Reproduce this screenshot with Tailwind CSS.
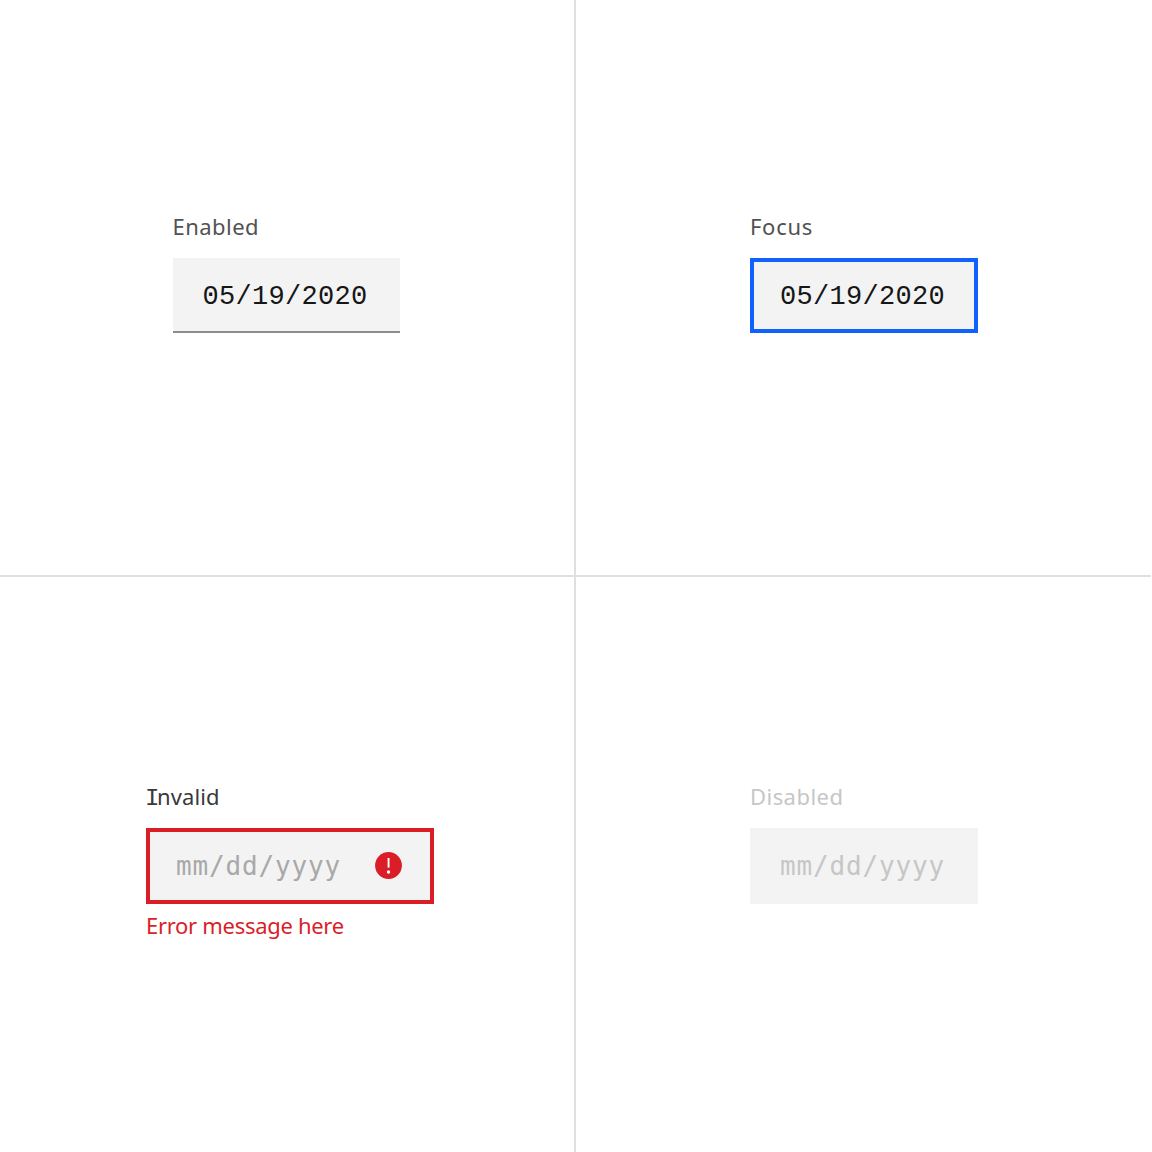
<!DOCTYPE html>
<html lang="en"><head><meta charset="utf-8"><title>Date input states</title>
<script src="https://cdn.jsdelivr.net/npm/@tailwindcss/browser@4"></script></head>
<body class="bg-white font-['Noto_Sans',sans-serif] text-[22px] leading-8 text-[#525252]">
<main class="grid h-[1152px] w-[1151px] grid-cols-[576px_575px] grid-rows-[577px_575px] overflow-hidden">
  <section class="border-r-2 border-b-2 border-[#e0e0e0] pt-[210px] pl-[172.5px]">
    <div class="h-8 tracking-[0.45px]">Enabled</div>
    <div class="mt-4 flex h-[75px] w-[227px] items-center border-b-2 border-[#8d8d8d] bg-[#f3f3f3] pl-[30px] font-['Liberation_Mono',monospace] text-[27px] tracking-[0.3px] text-[#161616]"><span class="pt-1">05/19/2020</span></div>
  </section>
  <section class="border-b-2 border-[#e0e0e0] pt-[210px] pl-[174px]">
    <div class="h-8 tracking-[0.7px]">Focus</div>
    <div class="mt-4 flex h-[75px] w-[228px] items-center border-4 border-[#0f62fe] bg-[#f3f3f3] pl-[26px] font-['Liberation_Mono',monospace] text-[27px] tracking-[0.3px] text-[#161616]"><span class="pt-0.5">05/19/2020</span></div>
  </section>
  <section class="border-r-2 border-[#e0e0e0] pt-[203px] pl-[146px]">
    <div class="-ml-px h-8 tracking-[0.15px] text-[#393939]"><span class="font-['Liberation_Mono',monospace] text-[24px] leading-none tracking-[-2.5px]">I</span>nvalid</div>
    <div class="mt-4 flex h-[76px] w-[288px] items-center border-4 border-[#da1e28] bg-[#f3f3f3] pl-[26px] font-['DejaVu_Sans_Mono',monospace] text-[26px] tracking-[0.85px] text-[#a8a8a8]"><span>mm/dd/yyyy</span>
      <svg class="mb-px ml-[34px] h-[27px] w-[27px] shrink-0" viewBox="0 0 27 27"><circle cx="13.5" cy="13.5" r="13.4" fill="#da1e28"/><path d="M12.6 6h1.9v9.6h-1.9z" fill="#fff"/><circle cx="13.5" cy="20" r="1.7" fill="#fff"/></svg>
    </div>
    <div class="mt-[5px] tracking-[-0.3px] text-[#da1e28]">Error message here</div>
  </section>
  <section class="pt-[203px] pl-[174px]">
    <div class="h-8 tracking-[0.45px] text-[#c6c6c6]">Disabled</div>
    <div class="mt-4 flex h-[76px] w-[228px] items-center bg-[#f3f3f3] pl-[30px] font-['DejaVu_Sans_Mono',monospace] text-[26px] tracking-[0.85px] text-[#c6c6c6]"><span>mm/dd/yyyy</span></div>
  </section>
</main>
</body></html>
